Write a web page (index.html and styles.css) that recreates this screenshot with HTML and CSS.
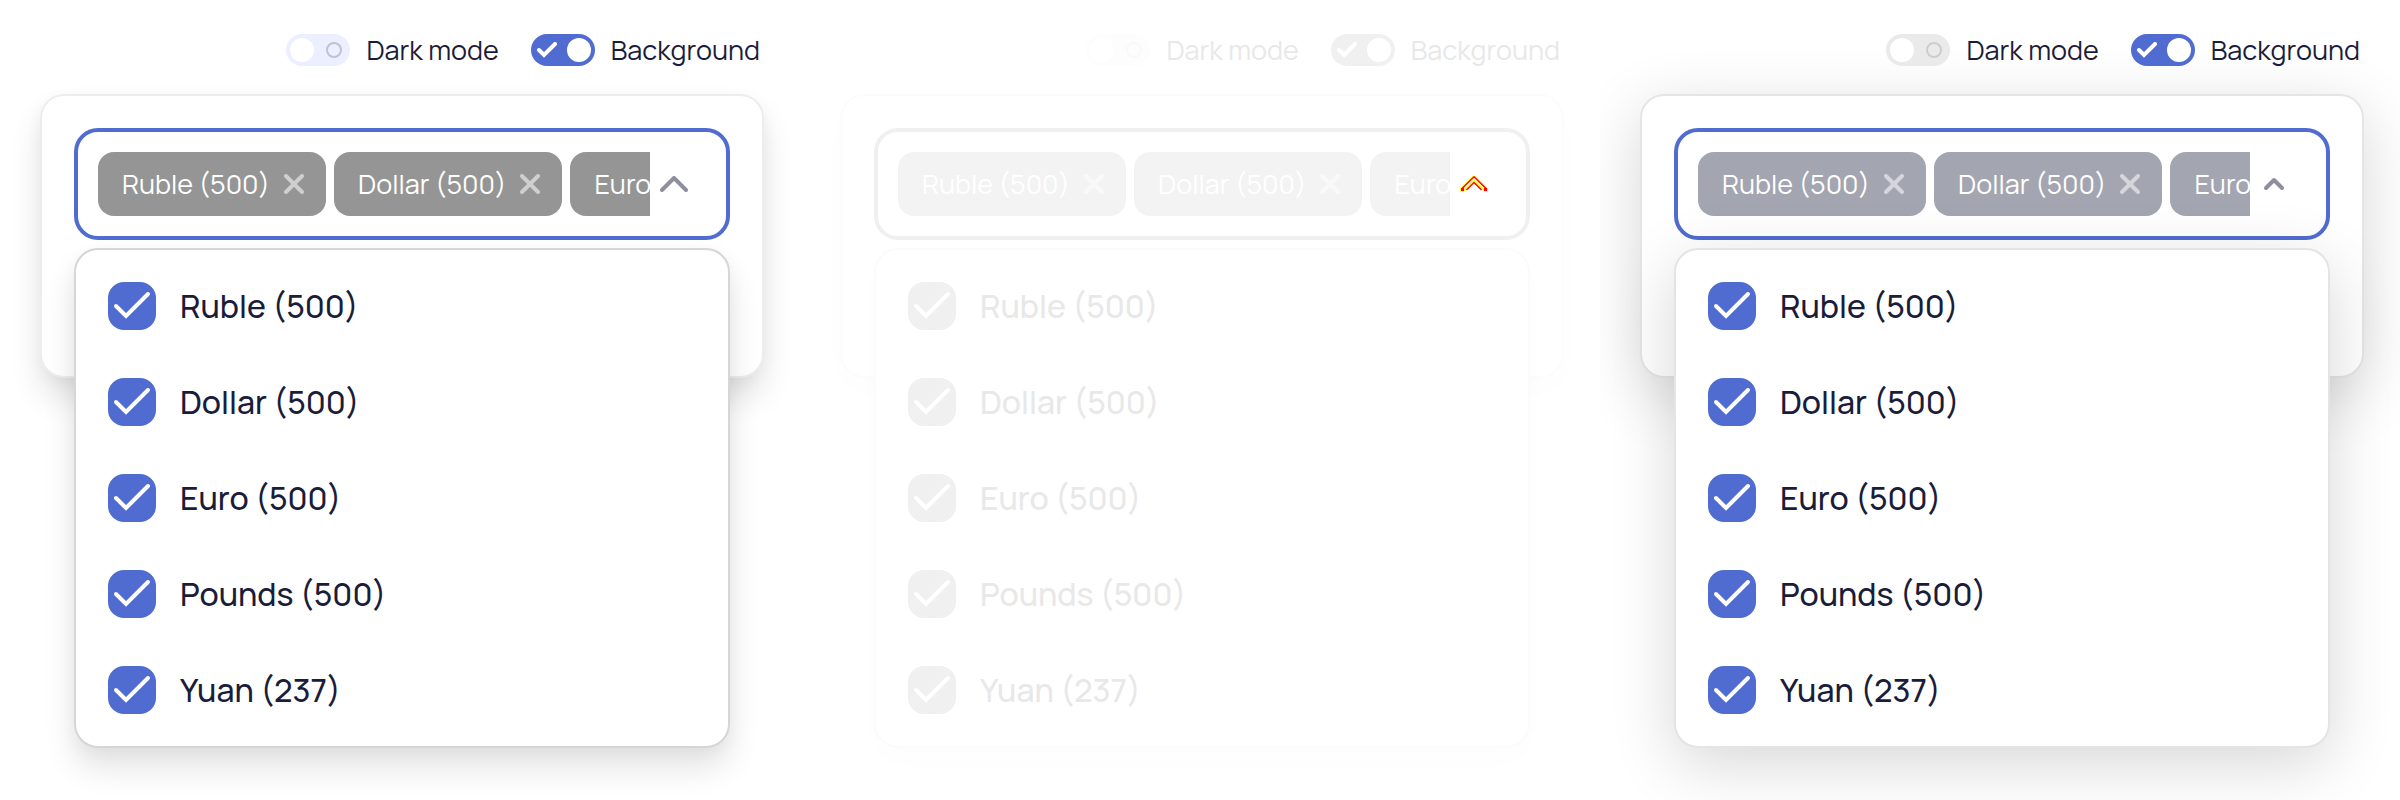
FILE: index.html
```
<!DOCTYPE html>
<html lang="en">
<head>
<meta charset="utf-8">
<meta name="viewport" content="width=device-width, initial-scale=1">
<title>Multiselect comparison</title>
<link rel="stylesheet" href="styles.css">
</head>
<body>
<svg class="sprite" aria-hidden="true">
  <symbol id="check" viewBox="0 0 48 48"><path d="M8 24 18 34 40 12" fill="none" stroke="currentColor" stroke-width="4" stroke-linecap="round" stroke-linejoin="miter"/></symbol>
  <symbol id="tick" viewBox="0 0 20 16"><path d="M2 8 7 13 18 2" fill="none" stroke="currentColor" stroke-width="4" stroke-linecap="round"/></symbol>
  <symbol id="cross" viewBox="0 0 20 20"><path d="M2 2 18 18M18 2 2 18" fill="none" stroke="currentColor" stroke-width="4" stroke-linecap="round"/></symbol>
  <symbol id="chevron" viewBox="0 0 28 16"><path d="M2 14 14 2 26 14" fill="none" stroke="currentColor" stroke-width="4" stroke-linecap="round" stroke-linejoin="round"/></symbol>
  <symbol id="chevron-small" viewBox="0 0 28 16"><path d="M6 12 14 4 22 12" fill="none" stroke="currentColor" stroke-width="4" stroke-linecap="round" stroke-linejoin="round"/></symbol>
  <symbol id="chevron-diff" viewBox="0 0 28 16"><g fill="none"><path d="M2 14 14 2 26 14" stroke="#ff0" stroke-width="5" stroke-linecap="round"/><path d="M3 13 14 2 25 13" stroke="#fffdf0" stroke-width="2"/><path d="M1.500 13 14 .8 26.500 13M6.500 14 14 6.500 21.500 14" stroke="#f00" stroke-width="1.400"/><path d="M1 12h3v3H1zM24 12h3v3h-3z" fill="#f00"/></g></symbol>
</svg>
<main class="board">
  <section class="panel panel-before">
    <div class="settings">
      <label class="setting"><span class="switch"><input type="checkbox" role="switch"><span class="thumb"></span><span class="ring"></span></span>Dark mode</label>
      <label class="setting"><span class="switch"><input type="checkbox" role="switch" checked><svg class="tick"><use href="#tick"/></svg><span class="thumb"></span></span>Background</label>
    </div>
    <div class="card">
      <div class="select">
        <div class="field">
          <div class="chips">
            <span class="chip">Ruble (500)<button class="remove" type="button" aria-label="Remove Ruble"><svg><use href="#cross"/></svg></button></span>
            <span class="chip">Dollar (500)<button class="remove" type="button" aria-label="Remove Dollar"><svg><use href="#cross"/></svg></button></span>
            <span class="chip">Euro (500)<button class="remove" type="button" aria-label="Remove Euro"><svg><use href="#cross"/></svg></button></span>
          </div>
          <button class="toggle" type="button" aria-label="Close list" aria-expanded="true"><svg><use href="#chevron"/></svg></button>
        </div>
        <div class="menu">
          <label class="option"><span class="box"><input type="checkbox" checked><svg><use href="#check"/></svg></span>Ruble (500)</label>
          <label class="option"><span class="box"><input type="checkbox" checked><svg><use href="#check"/></svg></span>Dollar (500)</label>
          <label class="option"><span class="box"><input type="checkbox" checked><svg><use href="#check"/></svg></span>Euro (500)</label>
          <label class="option"><span class="box"><input type="checkbox" checked><svg><use href="#check"/></svg></span>Pounds (500)</label>
          <label class="option"><span class="box"><input type="checkbox" checked><svg><use href="#check"/></svg></span>Yuan (237)</label>
        </div>
      </div>
    </div>
  </section>
  <section class="panel panel-diff">
    <div class="settings">
      <label class="setting"><span class="switch"><input type="checkbox" role="switch"><span class="thumb"></span><span class="ring"></span></span>Dark mode</label>
      <label class="setting"><span class="switch"><input type="checkbox" role="switch" checked><svg class="tick"><use href="#tick"/></svg><span class="thumb"></span></span>Background</label>
    </div>
    <div class="card">
      <div class="select">
        <div class="field">
          <div class="chips">
            <span class="chip">Ruble (500)<button class="remove" type="button" aria-label="Remove Ruble"><svg><use href="#cross"/></svg></button></span>
            <span class="chip">Dollar (500)<button class="remove" type="button" aria-label="Remove Dollar"><svg><use href="#cross"/></svg></button></span>
            <span class="chip">Euro (500)<button class="remove" type="button" aria-label="Remove Euro"><svg><use href="#cross"/></svg></button></span>
          </div>
          <button class="toggle" type="button" aria-label="Close list" aria-expanded="true"><svg><use href="#chevron-diff"/></svg></button>
        </div>
        <div class="menu">
          <label class="option"><span class="box"><input type="checkbox" checked><svg><use href="#check"/></svg></span>Ruble (500)</label>
          <label class="option"><span class="box"><input type="checkbox" checked><svg><use href="#check"/></svg></span>Dollar (500)</label>
          <label class="option"><span class="box"><input type="checkbox" checked><svg><use href="#check"/></svg></span>Euro (500)</label>
          <label class="option"><span class="box"><input type="checkbox" checked><svg><use href="#check"/></svg></span>Pounds (500)</label>
          <label class="option"><span class="box"><input type="checkbox" checked><svg><use href="#check"/></svg></span>Yuan (237)</label>
        </div>
      </div>
    </div>
  </section>
  <section class="panel panel-after">
    <div class="settings">
      <label class="setting"><span class="switch"><input type="checkbox" role="switch"><span class="thumb"></span><span class="ring"></span></span>Dark mode</label>
      <label class="setting"><span class="switch"><input type="checkbox" role="switch" checked><svg class="tick"><use href="#tick"/></svg><span class="thumb"></span></span>Background</label>
    </div>
    <div class="card">
      <div class="select">
        <div class="field">
          <div class="chips">
            <span class="chip">Ruble (500)<button class="remove" type="button" aria-label="Remove Ruble"><svg><use href="#cross"/></svg></button></span>
            <span class="chip">Dollar (500)<button class="remove" type="button" aria-label="Remove Dollar"><svg><use href="#cross"/></svg></button></span>
            <span class="chip">Euro (500)<button class="remove" type="button" aria-label="Remove Euro"><svg><use href="#cross"/></svg></button></span>
          </div>
          <button class="toggle" type="button" aria-label="Close list" aria-expanded="true"><svg><use href="#chevron-small"/></svg></button>
        </div>
        <div class="menu">
          <label class="option"><span class="box"><input type="checkbox" checked><svg><use href="#check"/></svg></span>Ruble (500)</label>
          <label class="option"><span class="box"><input type="checkbox" checked><svg><use href="#check"/></svg></span>Dollar (500)</label>
          <label class="option"><span class="box"><input type="checkbox" checked><svg><use href="#check"/></svg></span>Euro (500)</label>
          <label class="option"><span class="box"><input type="checkbox" checked><svg><use href="#check"/></svg></span>Pounds (500)</label>
          <label class="option"><span class="box"><input type="checkbox" checked><svg><use href="#check"/></svg></span>Yuan (237)</label>
        </div>
      </div>
    </div>
  </section>
</main>
</body>
</html>
```
FILE: styles.css
```
* { box-sizing: border-box; }
body { margin: 0; background: #fff; font-family: Manrope, Inter, sans-serif; }
button { border: 0; padding: 0; background: none; cursor: pointer; }
svg { display: block; }
.sprite { position: absolute; width: 0; height: 0; }

.board { display: flex; min-height: 100vh; overflow: hidden; }

.panel {
  --accent: #506cd1;
  --text: #1a1d3a;
  --chip: #959595;
  --chip-text: #fff;
  --cross: #cfcfcf;
  --chevron: #8e8e9f;
  --off: #ebefff;
  --ring: #bfc2d0;
  --card-line: #ededed;
  --menu-line: #d6d6d6;
  --shadow: 0 20px 32px rgba(0, 0, 0, 0.11), 0 4px 16px rgba(0, 0, 0, 0.04);
  flex: 1;
  min-width: 0;
  padding: 30px 36px 0 40px;
  overflow: hidden;
  color: var(--text);
}
.panel-diff {
  --accent: #f0f0f0;
  --text: #e8e8e8;
  --chip: #f3f3f3;
  --cross: #f9f9f9;
  --off: #fdfdfd;
  --ring: #f9f9f9;
  --card-line: #fcfcfc;
  --menu-line: #fbfbfb;
  --shadow: 0 12px 32px rgba(0, 0, 0, 0.01);
}
.panel-after {
  --chip: #a3a5b1;
  --cross: #d5d6dc;
  --off: #eaeaea;
  --ring: #cdcdcd;
  --card-line: #e5e5e5;
  --menu-line: #e4e4e4;
  --shadow: 0 16px 64px rgba(0, 0, 0, 0.16);
}

.settings { display: flex; justify-content: flex-end; gap: 32px; height: 64px; padding-right: 4px; }
.setting { display: flex; align-items: center; gap: 16px; height: 40px; font-size: 27px; line-height: 40px; white-space: nowrap; }
.switch { display: grid; align-items: center; width: 64px; height: 32px; }
.switch > * { grid-area: 1 / 1; }
.switch input { appearance: none; width: 64px; height: 32px; margin: 0; border-radius: 16px; background: var(--off); }
.switch input:checked { background: var(--accent); }
.thumb { width: 24px; height: 24px; margin: 0 4px; border-radius: 50%; background: #fff; }
.switch input:checked ~ .thumb { justify-self: end; }
.ring { justify-self: end; width: 16px; height: 16px; margin-right: 8px; border: 2px solid var(--ring); border-radius: 50%; }
.tick { width: 20px; height: 16px; margin-left: 6px; color: #fff; }

.card { padding: 32px; border: 2px solid var(--card-line); border-radius: 24px; background: #fff; box-shadow: var(--shadow); }
.select { position: relative; padding-bottom: 104px; }
.field { display: flex; gap: 8px; padding: 20px; border: 4px solid var(--accent); border-radius: 24px; background: transparent; }
.chips { display: flex; flex: 1; gap: 8px; min-width: 0; overflow: hidden; }
.chip { display: flex; flex: none; align-items: center; gap: 14px; height: 64px; padding: 0 22px 0 24px; border-radius: 16px; background: var(--chip); color: var(--chip-text); font-size: 27px; line-height: 36px; white-space: nowrap; }
.remove { color: var(--cross); }
.remove svg { width: 20px; height: 20px; }
.toggle { display: flex; align-items: center; width: 48px; color: var(--chevron); }
.toggle svg { width: 28px; height: 16px; margin-left: 2px; }

.menu { position: absolute; top: 120px; left: 0; right: 0; padding: 8px 0; border: 2px solid var(--menu-line); border-radius: 24px; background: #fff; box-shadow: var(--shadow); }
.option { display: flex; align-items: center; gap: 24px; height: 96px; padding: 0 32px; font-size: 32px; font-weight: 500; line-height: 48px; }
.box { display: grid; width: 48px; height: 48px; color: #fff; }
.box > * { grid-area: 1 / 1; width: 48px; height: 48px; }
.box input { appearance: none; margin: 0; border-radius: 16px; background: #fff; border: 2px solid var(--accent); }
.box input:checked { background: var(--accent); }
.box svg { pointer-events: none; visibility: hidden; }
.box input:checked + svg { visibility: visible; }
```
